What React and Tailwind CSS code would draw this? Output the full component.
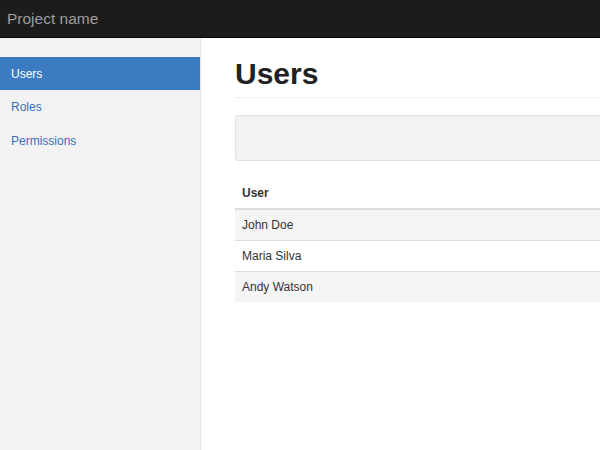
export default function App() {
  const font = { fontFamily: '"Liberation Sans", Arial, sans-serif' };
  return (
    <div className="h-[450px] w-[600px] overflow-hidden bg-white text-[#333]" style={font}>
      <div className="flex h-[38px] items-center border-b border-[#080808] bg-[#1c1c1c] px-[7px]">
        <span className="text-[15.5px] text-[#9d9d9d]">Project name</span>
      </div>
      <div className="flex h-[412px]">
        <div className="w-[201px] shrink-0 border-r border-[#e8e8e8] bg-[#f2f2f2] pt-[19px]">
          <div className="flex h-[33px] items-center bg-[#3c7bc2] px-[11px] text-[12px] text-white">Users</div>
          <div className="flex h-[34px] items-center px-[11px] text-[12px] text-[#3a6fb6]">Roles</div>
          <div className="flex h-[34px] items-center px-[11px] text-[12px] text-[#3a6fb6]">Permissions</div>
        </div>
        <div className="-mr-10 flex-1 pl-[34px]">
          <div className="mt-[18px] border-b border-[#eee] pb-[5px]">
            <h1 className="text-[30px] font-bold leading-[36px] text-[#222]">Users</h1>
          </div>
          <div className="mt-[17px] h-[46px] rounded-[3px] border border-[#e0e0e0] bg-[#f2f2f2]"></div>
          <table className="mt-[17px] w-full border-collapse text-[12px]">
            <thead>
              <tr>
                <th className="h-[31px] border-b-2 border-[#ddd] px-[7px] text-left align-middle font-bold">User</th>
              </tr>
            </thead>
            <tbody>
              {["John Doe", "Maria Silva", "Andy Watson"].map((n, i) => (
                <tr key={n} className={i % 2 === 0 ? "bg-[#f5f5f5]" : "bg-white"}>
                  <td className={"h-[31px] px-[7px] align-middle " + (i > 0 ? "border-t border-[#ddd]" : "")}>{n}</td>
                </tr>
              ))}
            </tbody>
          </table>
        </div>
      </div>
    </div>
  );
}
